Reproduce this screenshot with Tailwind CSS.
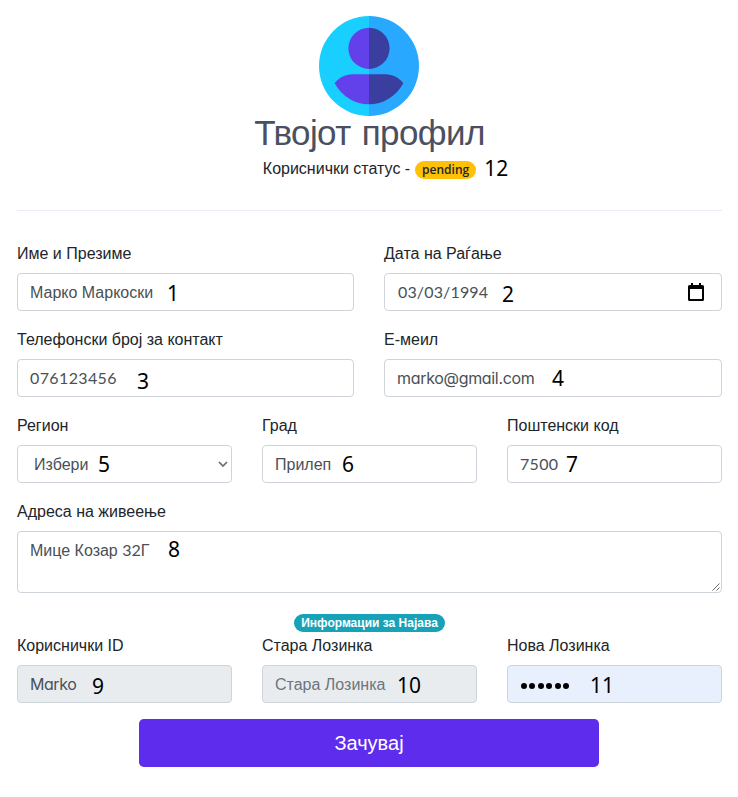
<!DOCTYPE html>
<html lang="mk">
<head>
<meta charset="utf-8">
<title>Твојот профил</title>
<script src="https://cdn.jsdelivr.net/npm/@tailwindcss/browser@4"></script>
</head>
<body class="bg-white font-['Liberation_Sans',sans-serif] text-base text-[#212529]">
<main class="flex h-[797px] w-[738px] flex-col pt-4 pr-4 pl-[17px]">
  <header class="flex h-[194px] shrink-0 flex-col items-center">
    <svg class="mr-px h-[100px] w-[100px] shrink-0" viewBox="0 0 100 100">
      <path fill="#18cfff" d="M50 0a50 50 0 0 0 0 100z"/>
      <path fill="#29a8ff" d="M50 0a50 50 0 0 1 0 100z"/>
      <path fill="#6241ea" d="M50 11.7a20.6 20.6 0 0 0 0 41.2zM50 58.2H34C26 58.2 19.5 62 15.7 67.2C23 80.500 36 88.300 50 88.300z"/>
      <path fill="#393e9f" d="M50 11.7a20.6 20.6 0 0 1 0 41.2zM50 58.2H66C74 58.2 80.500 62 84.300 67.2C77 80.500 64 88.300 50 88.300z"/>
    </svg>
    <h1 class="-mt-[5px] h-[43px] text-[35px] leading-[43px] font-normal tracking-[-0.6px] word-spacing-normal whitespace-nowrap text-[#4a5060] [word-spacing:2px]">Твојот профил</h1>
    <div class="-mt-px ml-8 flex h-8 items-center whitespace-nowrap">
      <span>Кориснички статус -</span>
      <span class="mt-px ml-[5px] flex h-[18px] w-[61px] items-center justify-center rounded-full bg-[#ffc107] font-['Open_Sans',sans-serif] text-xs font-semibold">pending</span>
      <span class="ml-2 font-['Noto_Sans',sans-serif] text-[21px] text-black">12</span>
    </div>
  </header>
  <hr class="border-[#ebebf5]">
  <form class="flex flex-col pt-[30px]">
    <div class="grid grid-cols-[337px_338px] gap-x-[30px] gap-y-4">
      <div>
        <div class="mb-2 h-6 leading-[26px]">Име и Презиме</div>
        <div class="relative flex h-[38px] items-center rounded border border-[#ced4da] px-3 pt-0.5 text-[#495057]">Марко Маркоски<span class="absolute top-[4px] left-[149px] font-['Noto_Sans',sans-serif] text-[21px] leading-[30px] text-black">1</span></div>
      </div>
      <div>
        <div class="mb-2 h-6 leading-[26px]">Дата на Раѓање</div>
        <div class="relative flex h-[38px] items-center rounded border border-[#ced4da] pr-[17px] pl-[13px] text-[#495057]"><span class="font-['Lato',sans-serif] tracking-[0.15px]">03/03/1994</span><span class="absolute top-[5px] left-[117px] font-['Noto_Sans',sans-serif] text-[21px] leading-[30px] text-black">2</span>
          <svg class="mb-px ml-auto h-[18px] w-4" viewBox="0 0 16 18"><path fill="#000" fill-rule="evenodd" d="M3 0h2v2h6V0h2v2h1.500A1.500 1.500 0 0 1 16 3.500v13a1.500 1.500 0 0 1-1.500 1.500h-13A1.500 1.500 0 0 1 0 16.500v-13A1.500 1.500 0 0 1 1.500 2H3zM2 6v10h12V6z"/></svg>
        </div>
      </div>
      <div>
        <div class="mb-2 h-6 leading-[26px]">Телефонски број за контакт</div>
        <div class="relative flex h-[38px] items-center rounded border border-[#ced4da] px-3 text-[#495057]"><span class="font-['Lato',sans-serif] tracking-[0.38px]">076123456</span><span class="absolute top-[6px] left-[119px] font-['Noto_Sans',sans-serif] text-[21px] leading-[30px] text-black">3</span></div>
      </div>
      <div>
        <div class="mb-2 h-6 leading-[26px]">Е-меил</div>
        <div class="relative flex h-[38px] items-center rounded border border-[#ced4da] px-3 text-[#495057]"><span class="font-['Inter',sans-serif] tracking-[-0.32px] [font-feature-settings:'cv11']">marko@gmail.com</span><span class="absolute top-[3px] left-[167px] font-['Noto_Sans',sans-serif] text-[21px] leading-[30px] text-black">4</span></div>
      </div>
    </div>
    <div class="mt-4 grid grid-cols-3 gap-x-[30px]">
      <div>
        <div class="mb-2 h-6 leading-[26px]">Регион</div>
        <div class="relative flex h-[38px] items-center rounded border border-[#ced4da] pt-0.5 pr-[3px] pl-4 text-[#495057]">Избери<span class="absolute top-[3px] left-[80px] font-['Noto_Sans',sans-serif] text-[21px] leading-[30px] text-black">5</span>
          <svg class="mb-0.5 ml-auto h-[6px] w-[10px]" viewBox="0 0 10 6" fill="none" stroke="#6b6b6b" stroke-width="1.7"><path d="M1 1l4 4 4-4"/></svg>
        </div>
      </div>
      <div>
        <div class="mb-2 h-6 leading-[26px]">Град</div>
        <div class="relative flex h-[38px] items-center rounded border border-[#ced4da] px-3 pt-0.5 text-[#495057]">Прилеп<span class="absolute top-[3px] left-[79px] font-['Noto_Sans',sans-serif] text-[21px] leading-[30px] text-black">6</span></div>
      </div>
      <div>
        <div class="mb-2 h-6 leading-[26px]">Поштенски код</div>
        <div class="relative flex h-[38px] items-center rounded border border-[#ced4da] px-3 text-[#495057]"><span class="font-['Lato',sans-serif] tracking-[0.3px]">7500</span><span class="absolute top-[3px] left-[58px] font-['Noto_Sans',sans-serif] text-[21px] leading-[30px] text-black">7</span></div>
      </div>
    </div>
    <div class="mt-4">
      <div class="mb-2 h-6 leading-[26px]">Адреса на живеење</div>
      <div class="relative h-[62px] rounded border border-[#ced4da] px-3 py-[6px] leading-6 text-[#495057]">Мице Козар <span class="font-['Lato',sans-serif]">32</span>Г<span class="absolute top-[2px] left-[150px] font-['Noto_Sans',sans-serif] text-[21px] leading-[30px] text-black">8</span>
        <svg class="absolute right-px bottom-px h-2 w-2" viewBox="0 0 8 8" stroke="#555" stroke-width=".9"><path d="M.5 7.500l7-7M4.500 7.500l3-3"/></svg>
      </div>
    </div>
    <div class="mt-[21px] flex h-[19px] justify-center">
      <span class="flex h-[18px] w-[151px] items-center justify-center rounded-full bg-[#17a2b8] text-xs font-bold whitespace-nowrap text-white">Информации за Најава</span>
    </div>
    <div class="grid grid-cols-3 gap-x-[30px]">
      <div>
        <div class="mb-2 h-6 leading-[26px]">Кориснички ID</div>
        <div class="relative flex h-[38px] items-center rounded border border-[#ced4da] bg-[#e9ecef] px-3 text-[#495057]"><span class="font-['Inter',sans-serif] tracking-[-0.45px] [font-feature-settings:'cv11']">Marko</span><span class="absolute top-[5px] left-[74px] font-['Noto_Sans',sans-serif] text-[21px] leading-[30px] text-black">9</span></div>
      </div>
      <div>
        <div class="mb-2 h-6 leading-[26px]">Стара Лозинка</div>
        <div class="relative flex h-[38px] items-center rounded border border-[#ced4da] bg-[#e9ecef] px-3 pt-0.5 text-[#6c757d]">Стара Лозинка<span class="absolute top-[4px] left-[134px] font-['Noto_Sans',sans-serif] text-[21px] leading-[30px] text-black">10</span></div>
      </div>
      <div>
        <div class="mb-2 h-6 leading-[26px]">Нова Лозинка</div>
        <div class="relative flex h-[38px] items-center rounded border border-[#ced4da] bg-[#e8f0fe] px-3">
          <span class="mt-[3px] ml-[0.5px] flex gap-[2.500px]"><i class="size-[6px] rounded-full bg-black"></i><i class="size-[6px] rounded-full bg-black"></i><i class="size-[6px] rounded-full bg-black"></i><i class="size-[6px] rounded-full bg-black"></i><i class="size-[6px] rounded-full bg-black"></i><i class="size-[6px] rounded-full bg-black"></i></span>
          <span class="absolute top-[4px] left-[82px] font-['Noto_Sans',sans-serif] text-[21px] leading-[30px] text-black">11</span>
        </div>
      </div>
    </div>
    <button type="button" class="mt-4 ml-[122px] h-12 w-[460px] rounded-[4.800px] bg-[#5e2ced] text-xl text-white">Зачувај</button>
  </form>
</main>
</body>
</html>
